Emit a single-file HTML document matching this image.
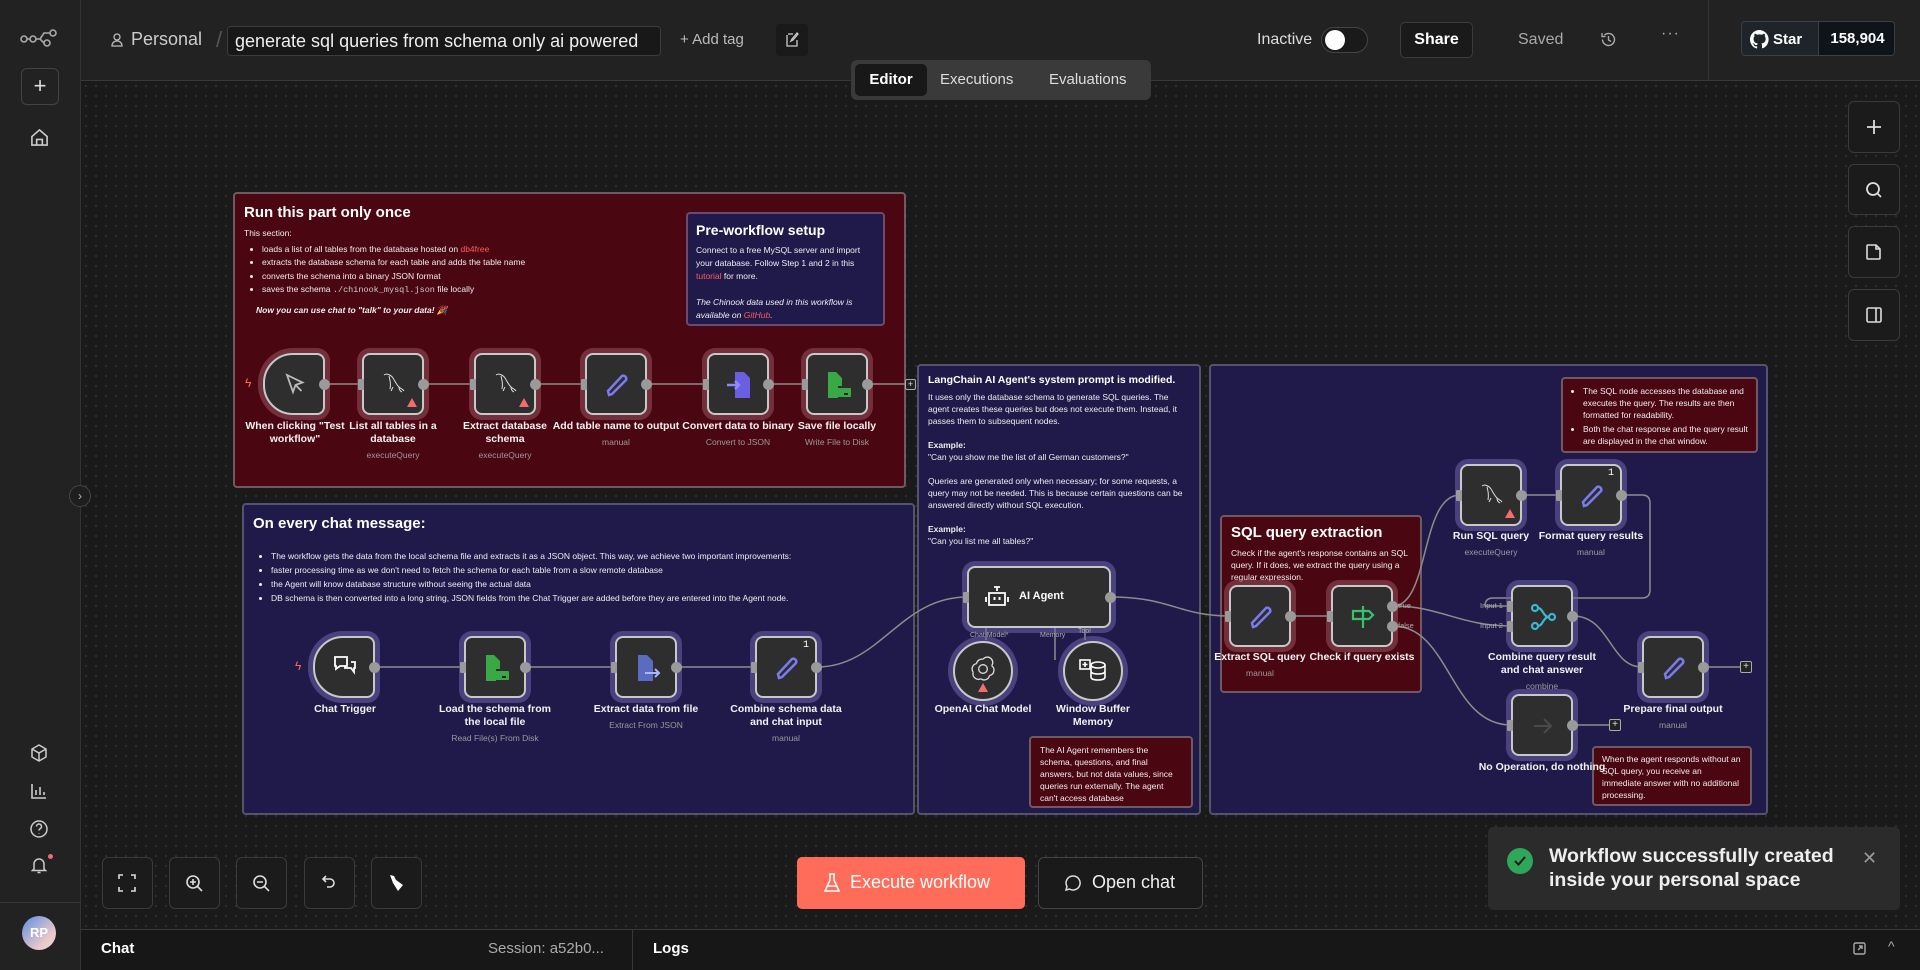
<!DOCTYPE html>
<html><head><meta charset="utf-8">
<style>
*{box-sizing:border-box;margin:0;padding:0}
body{width:1920px;height:970px;overflow:hidden;background:#1b1b1b;font-family:"Liberation Sans",sans-serif;color:#fff;position:relative}
.abs{position:absolute}
#canvas{position:absolute;left:81px;top:81px;width:1839px;height:849px;background-color:#1a1a1a;background-image:radial-gradient(#343434 0.8px,transparent 1px);background-size:10px 10px}
#side{position:absolute;left:0;top:0;width:81px;height:970px;background:#222;border-right:1px solid #333}
#head{position:absolute;left:81px;top:0;width:1839px;height:81px;background:#222;border-bottom:1px solid #383838}
.sticky{position:absolute;border:2px solid #5e5e66;border-radius:4px}
.red{background:#4b0711;border-color:#6e5a60}
.blue{background:#201a4a;border-color:#55536c}
.sticky h1{font-size:15px;font-weight:bold;margin:10px 0 0 9px}
.txt{font-size:8.5px;line-height:13.5px;color:#eee}
.txt ul{margin-left:18px}
.node{position:absolute;width:62px;height:62px;background:#2e2e2e;border:2px solid #c8c8c8;border-radius:8px}
.hr{box-shadow:0 0 0 5px rgba(150,80,95,.55)}
.hb{box-shadow:0 0 0 5px rgba(110,100,170,.55)}
.in{position:absolute;left:-6px;top:24px;width:6px;height:11px;background:#9a9a9a;border-radius:1px}
.out{position:absolute;right:-7px;top:24px;width:11px;height:11px;background:#9a9a9a;border-radius:50%}
.lbl{position:absolute;width:150px;text-align:center;font-size:10.5px;font-weight:bold;line-height:13px;color:#f2f2f2}
.lbl span{display:block;font-weight:normal;font-size:8.5px;color:#9a9a9a;margin-top:3px}
.btn{position:absolute;border:1px solid #3a3a3a;border-radius:6px;background:#1b1b1b}
.ico{position:absolute;display:flex;align-items:center;justify-content:center}
</style></head><body>
<div id="canvas"></div>

<!-- sidebar -->
<div id="side">
 <svg class="abs" style="left:20px;top:28px" width="38" height="20" viewBox="0 0 38 20" fill="none" stroke="#aaa" stroke-width="1.6"><circle cx="4" cy="11" r="3"/><circle cx="13" cy="11" r="3"/><circle cx="27" cy="15" r="3"/><circle cx="33" cy="5" r="3"/><path d="M7 11h3M16 11h4l4 4M20 11l4-6h6"/></svg>
 <div class="abs" style="left:21px;top:68px;width:38px;height:37px;border:1px solid #444;border-radius:6px;text-align:center;font-size:22px;line-height:33px;color:#ddd">+</div>
 <svg class="abs" style="left:30px;top:128px" width="19" height="19" viewBox="0 0 20 20" fill="none" stroke="#ccc" stroke-width="1.7"><path d="M2 9L10 2l8 7v9H2z"/><path d="M7 18v-6h6v6"/></svg>
 <svg class="abs" style="left:29px;top:743px" width="20" height="20" viewBox="0 0 20 20" fill="none" stroke="#ccc" stroke-width="1.5"><path d="M10 2l7 4v8l-7 4-7-4V6z M3 6l7 4 7-4 M10 10v8"/></svg>
 <svg class="abs" style="left:29px;top:781px" width="20" height="20" viewBox="0 0 20 20" fill="none" stroke="#ccc" stroke-width="1.6"><path d="M3 3v14h14M7 14V9M11 14V6M15 14v-3"/></svg>
 <svg class="abs" style="left:29px;top:819px" width="20" height="20" viewBox="0 0 20 20" fill="none" stroke="#ccc" stroke-width="1.5"><circle cx="10" cy="10" r="8"/><path d="M7.5 7.5a2.5 2.5 0 1 1 3.5 2.3c-.7.4-1 .9-1 1.7M10 14v.5"/></svg>
 <svg class="abs" style="left:29px;top:855px" width="20" height="20" viewBox="0 0 20 20" fill="none" stroke="#ccc" stroke-width="1.5"><path d="M5 14V9a5 5 0 0 1 10 0v5l1.5 1.5h-13z M8.5 17.5h3"/></svg>
 <div class="abs" style="left:48px;top:854px;width:5px;height:5px;border-radius:50%;background:#f06a7a"></div>
 <div class="abs" style="left:0;top:902px;width:81px;height:1px;background:#383838"></div>
 <div class="abs" style="left:22px;top:916px;width:34px;height:34px;border-radius:50%;background:linear-gradient(135deg,#5b8ee6,#e8c8c8 70%,#f5dada);font-size:13px;font-weight:bold;text-align:center;line-height:34px">RP</div>
</div>
<div class="abs" style="left:69px;top:485px;width:22px;height:22px;border-radius:50%;border:1px solid #444;background:#1e1e1e;color:#bbb;font-size:12px;text-align:center;line-height:20px">›</div>

<!-- header -->
<div id="head">
 <svg class="abs" style="left:30px;top:33px" width="12" height="14" viewBox="0 0 12 14" fill="none" stroke="#bbb" stroke-width="1.3"><circle cx="6" cy="4" r="3"/><path d="M1 13c0-3 2-5 5-5s5 2 5 5z"/></svg>
 <div class="abs" style="left:50px;top:29px;font-size:18px;color:#ccc">Personal</div>
 <div class="abs" style="left:135px;top:27px;font-size:22px;color:#555">/</div>
 <div class="abs" style="left:146px;top:26px;width:434px;height:30px;border:1px solid #3c3c3c;border-radius:4px;background:#181818;font-size:18px;line-height:28px;padding-left:7px;color:#eee">generate sql queries from schema only ai powered</div>
 <div class="abs" style="left:599px;top:31px;font-size:15px;color:#bbb">+ Add tag</div>
 <div class="abs" style="left:695px;top:24px;width:32px;height:32px;border-radius:4px;background:#1a1a1a"></div>
 <svg class="abs" style="left:704px;top:32px" width="14" height="16" viewBox="0 0 14 16" fill="none" stroke="#ccc" stroke-width="1.3"><path d="M3 2h5M2 3v11h10V8 M12 1l-5 6-1 2 2-1 5-6z"/></svg>
 <div class="abs" style="left:1176px;top:31px;font-size:16px;color:#ddd">Inactive</div>
 <div class="abs" style="left:1240px;top:27px;width:47px;height:26px;border-radius:13px;border:1px solid #444;background:#1a1a1a"><div style="position:absolute;left:3px;top:2px;width:20px;height:20px;border-radius:50%;background:#fff"></div></div>
 <div class="abs" style="left:1319px;top:22px;width:73px;height:36px;border:1px solid #3c3c3c;border-radius:5px;background:#1a1a1a;font-size:16px;font-weight:bold;text-align:center;line-height:34px">Share</div>
 <div class="abs" style="left:1437px;top:31px;font-size:16px;color:#aaa">Saved</div>
 <svg class="abs" style="left:1519px;top:31px" width="17" height="17" viewBox="0 0 17 17" fill="none" stroke="#aaa" stroke-width="1.4"><path d="M2.5 8.5a6 6 0 1 0 2-4.5M2 2v3.5h3.5M8.5 5v4l2.5 1.5"/></svg>
 <div class="abs" style="left:1580px;top:25px;font-size:16px;color:#aaa;letter-spacing:1px">···</div>
 <div class="abs" style="left:1627px;top:0;width:1px;height:80px;background:#333"></div>
 <div class="abs" style="left:1660px;top:21px;width:154px;height:35px;border:1px solid #3a3f48;border-radius:4px;background:#1f242b;overflow:hidden">
  <svg class="abs" style="left:8px;top:8px" width="19" height="19" viewBox="0 0 16 16" fill="#fff"><path d="M8 0a8 8 0 0 0-2.5 15.6c.4 0 .5-.2.5-.4v-1.5c-2.2.5-2.7-1-2.7-1-.4-.9-.9-1.2-.9-1.2-.7-.5.1-.5.1-.5.8.1 1.2.8 1.2.8.7 1.3 1.9.9 2.4.7 0-.5.3-.9.5-1.1-1.8-.2-3.6-.9-3.6-4 0-.9.3-1.6.8-2.1-.1-.2-.4-1 .1-2.1 0 0 .7-.2 2.2.8a7.5 7.5 0 0 1 4 0c1.5-1 2.2-.8 2.2-.8.4 1.1.2 1.9.1 2.1.5.6.8 1.3.8 2.1 0 3.1-1.9 3.7-3.6 3.9.3.3.5.8.5 1.5v2.2c0 .2.1.5.6.4A8 8 0 0 0 8 0z"/></svg>
  <div class="abs" style="left:31px;top:9px;font-size:15px;font-weight:bold">Star</div>
  <div class="abs" style="left:76px;top:0;width:78px;height:35px;background:#0f131a;border-left:1px solid #3a3f48;font-size:15px;font-weight:bold;text-align:center;line-height:34px">158,904</div>
 </div>
</div>
<!-- tabs -->
<div class="abs" style="left:851px;top:60px;width:300px;height:40px;background:#3a3a3a;border-radius:6px"></div>
<div class="abs" style="left:855px;top:64px;width:72px;height:32px;background:#181818;border-radius:5px;font-size:15px;font-weight:bold;text-align:center;line-height:32px">Editor</div>
<div class="abs" style="left:940px;top:71px;font-size:15px;color:#ddd">Executions</div>
<div class="abs" style="left:1049px;top:71px;font-size:15px;color:#ddd">Evaluations</div>

<!-- stickies -->
<div class="sticky red" style="left:233px;top:192px;width:673px;height:296px">
 <h1>Run this part only once</h1>
 <div class="txt" style="margin:6px 0 0 9px">This section:
  <ul style="margin-top:2px">
   <li>loads a list of all tables from the database hosted on <span style="color:#ff5a5a">db4free</span></li>
   <li>extracts the database schema for each table and adds the table name</li>
   <li>converts the schema into a binary JSON format</li>
   <li>saves the schema <span style="font-family:'Liberation Mono',monospace;color:#ccc">./chinook_mysql.json</span> file locally</li>
  </ul>
  <div style="margin:6px 0 0 12px;font-style:italic;font-weight:bold">Now you can use chat to "talk" to your data! 🎉</div>
 </div>
</div>
<div class="sticky blue" style="left:686px;top:212px;width:199px;height:114px;border-color:#6a4a6e;padding:8px 8px">
 <div style="font-size:14px;font-weight:bold">Pre-workflow setup</div>
 <div class="txt" style="margin-top:6px;line-height:13px">Connect to a free MySQL server and import your database. Follow Step 1 and 2 in this <span style="color:#ff5a5a">tutorial</span> for more.<br><br><i>The Chinook data used in this workflow is available on <span style="color:#ff5a5a">GitHub</span>.</i></div>
</div>

<div class="sticky blue" style="left:242px;top:503px;width:673px;height:312px">
 <h1 style="margin-top:10px">On every chat message:</h1>
 <div class="txt" style="margin:17px 0 0 9px;font-size:8.5px;line-height:14px"><ul>
  <li>The workflow gets the data from the local schema file and extracts it as a JSON object. This way, we achieve two important improvements:</li>
  <li>faster processing time as we don't need to fetch the schema for each table from a slow remote database</li>
  <li>the Agent will know database structure without seeing the actual data</li>
  <li>DB schema is then converted into a long string, JSON fields from the Chat Trigger are added before they are entered into the Agent node.</li></ul></div>
</div>

<div class="sticky blue" style="left:917px;top:364px;width:284px;height:451px;padding:8px 9px">
 <div style="font-size:10.5px;font-weight:bold">LangChain AI Agent's system prompt is modified.</div>
 <div class="txt" style="margin-top:5px;line-height:12px">It uses only the database schema to generate SQL queries. The agent creates these queries but does not execute them. Instead, it passes them to subsequent nodes.<br><br><b>Example:</b><br>"Can you show me the list of all German customers?"<br><br>Queries are generated only when necessary; for some requests, a query may not be needed. This is because certain questions can be answered directly without SQL execution.<br><br><b>Example:</b><br>"Can you list me all tables?"</div>
</div>
<div class="sticky red" style="left:1029px;top:736px;width:164px;height:72px;padding:6px 9px"><div class="txt" style="line-height:12px">The AI Agent remembers the schema, questions, and final answers, but not data values, since queries run externally. The agent can't access database</div></div>

<div class="sticky blue" style="left:1209px;top:364px;width:559px;height:451px"></div>
<div class="sticky red" style="left:1561px;top:377px;width:197px;height:76px;padding:6px 4px"><div class="txt" style="line-height:12px"><ul style="margin-left:16px"><li>The SQL node accesses the database and executes the query. The results are then formatted for readability.</li><li style="margin-top:2px">Both the chat response and the query result are displayed in the chat window.</li></ul></div></div>
<div class="sticky red" style="left:1220px;top:515px;width:202px;height:178px;padding:7px 9px">
 <div style="font-size:15px;font-weight:bold">SQL query extraction</div>
 <div class="txt" style="margin-top:6px;line-height:12px">Check if the agent's response contains an SQL query. If it does, we extract the query using a regular expression.</div>
</div>
<div class="sticky red" style="left:1592px;top:746px;width:160px;height:60px;padding:5px 8px"><div class="txt" style="line-height:12px">When the agent responds without an SQL query, you receive an immediate answer with no additional processing.</div></div>

<!-- edges -->
<svg class="abs" style="left:0;top:0" width="1920" height="970" fill="none" stroke="#8c8c8c" stroke-width="1.5">
 <path d="M327 384H362M424 384H474M536 384H585M647 384H707M769 384H806M868 384H906"/>
 <path d="M377 667H464M526 667H615M677 667H755"/>
 <path d="M817 667C880 667 900 597 967 597"/>
 <path d="M1111 597C1170 597 1180 616 1229 616"/>
 <path d="M1291 616H1331"/>
 <path d="M1393 606C1430 606 1420 495 1460 495"/>
 <path d="M1393 606C1440 606 1460 626 1511 626"/>
 <path d="M1393 626C1450 626 1450 725 1511 725"/>
 <path d="M1522 495H1560"/>
 <path d="M1622 495H1642Q1650 495 1650 503V590Q1650 598 1642 598H1493Q1485 598 1485 606H1511"/>
 <path d="M1573 616C1610 616 1610 667 1642 667"/>
 <path d="M1704 667H1740M1573 725H1610"/>
 <path d="M986 628V640M1055 628V660M1085 628V640"/>
</svg>
<div class="abs" style="left:905px;top:379px;width:11px;height:11px;border:1px solid #aaa;border-radius:2px;background:#222;font-size:9px;line-height:9px;text-align:center;color:#ddd">+</div>
<div class="abs" style="left:1740px;top:661px;width:12px;height:12px;border:1px solid #aaa;border-radius:2px;background:#222;font-size:10px;line-height:10px;text-align:center;color:#ddd">+</div>
<div class="abs" style="left:1609px;top:719px;width:12px;height:12px;border:1px solid #aaa;border-radius:2px;background:#222;font-size:10px;line-height:10px;text-align:center;color:#ddd">+</div>

<!-- row1 nodes -->
<div class="abs" style="left:245px;top:376px;color:#ff6a4a;font-size:12px">ϟ</div>
<div class="node hr" style="left:263px;top:353px;border-radius:30px 8px 8px 30px"><div class="out"></div>
 <svg class="abs" style="left:18px;top:17px" width="24" height="24" viewBox="0 0 24 24" fill="none" stroke="#bbb" stroke-width="1.8"><path d="M4 3l6 17 2.5-7 7-2.5z M12.5 13l6 6"/></svg></div>
<div class="node hr" style="left:362px;top:353px"><div class="in"></div><div class="out"></div>
 <svg class="abs" style="left:15px;top:14px" width="30" height="30" viewBox="0 0 30 30" fill="none" stroke="#ddd" stroke-width="1"><path d="M5 6c3-2 7 0 9 3s3 6 6 9c2 2 4 2 5 4M10 7c1 4 2 8 1 13M14 18l-2 4M20 18c0 2 1 4 3 5"/></svg>
 <div class="abs" style="left:43px;top:43px;width:0;height:0;border-left:5px solid transparent;border-right:5px solid transparent;border-bottom:9px solid #f26d6d"></div></div>
<div class="node hr" style="left:474px;top:353px"><div class="in"></div><div class="out"></div>
 <svg class="abs" style="left:15px;top:14px" width="30" height="30" viewBox="0 0 30 30" fill="none" stroke="#ddd" stroke-width="1"><path d="M5 6c3-2 7 0 9 3s3 6 6 9c2 2 4 2 5 4M10 7c1 4 2 8 1 13M14 18l-2 4M20 18c0 2 1 4 3 5"/></svg>
 <div class="abs" style="left:43px;top:43px;width:0;height:0;border-left:5px solid transparent;border-right:5px solid transparent;border-bottom:9px solid #f26d6d"></div></div>
<div class="node hr" style="left:585px;top:353px"><div class="in"></div><div class="out"></div>
 <svg class="abs" style="left:16px;top:16px" width="28" height="28" viewBox="0 0 28 28" fill="none" stroke="#7b7bf0" stroke-width="2.5"><path d="M6 24l-1-4L19 5a3 3 0 0 1 4 4L9 23z"/></svg></div>
<div class="node hr" style="left:707px;top:353px"><div class="in"></div><div class="out"></div>
 <svg class="abs" style="left:16px;top:15px" width="28" height="30" viewBox="0 0 28 30"><path d="M10 2h9l6 6v20H10z" fill="#6a5fe0"/><path d="M2 15h12M10 11l4 4-4 4" stroke="#8f88ff" stroke-width="2.5" fill="none"/></svg></div>
<div class="node hr" style="left:806px;top:353px"><div class="in"></div><div class="out"></div>
 <svg class="abs" style="left:16px;top:15px" width="30" height="30" viewBox="0 0 30 30"><path d="M4 2h8l6 6v8H4z M4 14h10v14H4z" fill="#3aa845"/><rect x="13" y="18" width="14" height="9" rx="1" fill="#3aa845"/><rect x="20" y="23" width="4" height="2" fill="#222"/></svg></div>
<div class="lbl" style="left:220px;top:420px">When clicking "Test<br>workflow"</div>
<div class="lbl" style="left:318px;top:420px">List all tables in a<br>database<span>executeQuery</span></div>
<div class="lbl" style="left:430px;top:420px">Extract database<br>schema<span>executeQuery</span></div>
<div class="lbl" style="left:541px;top:420px">Add table name to output<span>manual</span></div>
<div class="lbl" style="left:663px;top:420px">Convert data to binary<span>Convert to JSON</span></div>
<div class="lbl" style="left:762px;top:420px">Save file locally<span>Write File to Disk</span></div>

<!-- row2 nodes -->
<div class="abs" style="left:295px;top:659px;color:#ff6a4a;font-size:12px">ϟ</div>
<div class="node hb" style="left:313px;top:636px;border-radius:30px 8px 8px 30px"><div class="out"></div>
 <svg class="abs" style="left:17px;top:16px" width="26" height="26" viewBox="0 0 26 26" fill="none" stroke="#fff" stroke-width="1.8"><path d="M3 3h12v9H8l-4 3v-3H3z M13 12v2h6l3 4v-4h1V8h-4"/></svg></div>
<div class="node hb" style="left:464px;top:636px"><div class="in"></div><div class="out"></div>
 <svg class="abs" style="left:16px;top:15px" width="30" height="30" viewBox="0 0 30 30"><path d="M4 2h8l6 6v8H4z M4 14h10v14H4z" fill="#3aa845"/><rect x="13" y="18" width="14" height="9" rx="1" fill="#3aa845"/><rect x="20" y="23" width="4" height="2" fill="#222"/></svg></div>
<div class="node hb" style="left:615px;top:636px"><div class="in"></div><div class="out"></div>
 <svg class="abs" style="left:16px;top:15px" width="30" height="30" viewBox="0 0 30 30"><path d="M5 2h9l6 6v20H5z" fill="#5a6cc0"/><path d="M12 20h14M22 16l4 4-4 4" stroke="#aab4ff" stroke-width="2" fill="none"/></svg></div>
<div class="node hb" style="left:755px;top:636px"><div class="in"></div><div class="out"></div>
 <div class="abs" style="right:6px;top:2px;font-size:10px;font-family:'Liberation Mono',monospace">1</div>
 <svg class="abs" style="left:16px;top:16px" width="28" height="28" viewBox="0 0 28 28" fill="none" stroke="#7b7bf0" stroke-width="2.5"><path d="M6 24l-1-4L19 5a3 3 0 0 1 4 4L9 23z"/></svg></div>
<div class="lbl" style="left:270px;top:703px">Chat Trigger</div>
<div class="lbl" style="left:420px;top:703px">Load the schema from<br>the local file<span>Read File(s) From Disk</span></div>
<div class="lbl" style="left:571px;top:703px">Extract data from file<span>Extract From JSON</span></div>
<div class="lbl" style="left:711px;top:703px">Combine schema data<br>and chat input<span>manual</span></div>

<!-- AI agent -->
<div class="node hb" style="left:967px;top:566px;width:144px;height:62px"><div class="in"></div><div class="out"></div>
 <svg class="abs" style="left:16px;top:17px" width="24" height="24" viewBox="0 0 24 24" fill="none" stroke="#fff" stroke-width="1.8"><path d="M12 2v4M9 2h6M4 8h16v12H4z M1 12v5M23 12v5"/><rect x="8.5" y="12" width="2" height="3" fill="#fff" stroke="none"/><rect x="13.5" y="12" width="2" height="3" fill="#fff" stroke="none"/></svg>
 <div class="abs" style="left:50px;top:22px;font-size:11px;font-weight:bold">AI Agent</div></div>
<div class="abs" style="left:970px;top:632px;font-size:7px;color:#aaa">Chat Model*</div>
<div class="abs" style="left:1040px;top:632px;font-size:7px;color:#aaa">Memory</div>
<div class="abs" style="left:1078px;top:628px;font-size:7px;color:#aaa">Tool</div>
<div class="abs" style="left:953px;top:641px;width:60px;height:60px;border-radius:50%;background:#2e2e2e;border:2px solid #c8c8c8;box-shadow:0 0 0 5px rgba(110,100,170,.55)">
 <svg class="abs" style="left:15px;top:13px" width="26" height="26" viewBox="0 0 24 24" fill="none" stroke="#ddd" stroke-width="1.2"><circle cx="12" cy="12" r="4"/><path d="M12 3a5 5 0 0 1 8 6M20 9a5 5 0 0 1-2 9M18 18a5 5 0 0 1-8 3M10 21a5 5 0 0 1-7-6M3 15a5 5 0 0 1 3-8M6 7a5 5 0 0 1 6-4"/></svg>
 <div class="abs" style="left:23px;top:40px;width:0;height:0;border-left:5px solid transparent;border-right:5px solid transparent;border-bottom:9px solid #f26d6d"></div></div>
<div class="abs" style="left:1063px;top:641px;width:60px;height:60px;border-radius:50%;background:#2e2e2e;border:2px solid #c8c8c8;box-shadow:0 0 0 5px rgba(110,100,170,.55)">
 <svg class="abs" style="left:14px;top:16px" width="28" height="24" viewBox="0 0 28 24" fill="none" stroke="#fff" stroke-width="1.6"><rect x="1" y="1" width="10" height="9" fill="#2e2e2e"/><path d="M6 3v5M3.5 5.5h5"/><ellipse cx="19" cy="6" rx="7" ry="3"/><path d="M12 6v12c0 2 3 3 7 3s7-1 7-3V6M12 12c0 2 3 3 7 3s7-1 7-3"/></svg></div>
<div class="lbl" style="left:908px;top:703px">OpenAI Chat Model</div>
<div class="lbl" style="left:1018px;top:703px">Window Buffer<br>Memory</div>

<!-- SQL area nodes -->
<div class="node hr" style="left:1229px;top:585px"><div class="in"></div><div class="out"></div>
 <svg class="abs" style="left:16px;top:16px" width="28" height="28" viewBox="0 0 28 28" fill="none" stroke="#7b7bf0" stroke-width="2.5"><path d="M6 24l-1-4L19 5a3 3 0 0 1 4 4L9 23z"/></svg></div>
<div class="node hr" style="left:1331px;top:585px"><div class="in"></div>
 <div class="out" style="top:14px"></div><div class="out" style="top:34px"></div>
 <svg class="abs" style="left:16px;top:16px" width="28" height="28" viewBox="0 0 28 28" fill="none" stroke="#35c46a" stroke-width="2.2"><path d="M14 3v22M4 8h16l4 4-4 4H4z"/></svg></div>
<div class="abs" style="left:1398px;top:601px;font-size:7.5px;color:#aaa">true</div>
<div class="abs" style="left:1398px;top:621px;font-size:7.5px;color:#aaa">false</div>
<div class="lbl" style="left:1185px;top:651px">Extract SQL query<span>manual</span></div>
<div class="lbl" style="left:1287px;top:651px">Check if query exists</div>

<div class="node hb" style="left:1460px;top:464px"><div class="in"></div><div class="out"></div>
 <svg class="abs" style="left:15px;top:14px" width="30" height="30" viewBox="0 0 30 30" fill="none" stroke="#ddd" stroke-width="1"><path d="M5 6c3-2 7 0 9 3s3 6 6 9c2 2 4 2 5 4M10 7c1 4 2 8 1 13M14 18l-2 4M20 18c0 2 1 4 3 5"/></svg>
 <div class="abs" style="left:43px;top:43px;width:0;height:0;border-left:5px solid transparent;border-right:5px solid transparent;border-bottom:9px solid #f26d6d"></div></div>
<div class="node hb" style="left:1560px;top:464px"><div class="in"></div><div class="out"></div>
 <div class="abs" style="right:6px;top:2px;font-size:10px;font-family:'Liberation Mono',monospace">1</div>
 <svg class="abs" style="left:16px;top:16px" width="28" height="28" viewBox="0 0 28 28" fill="none" stroke="#7b7bf0" stroke-width="2.5"><path d="M6 24l-1-4L19 5a3 3 0 0 1 4 4L9 23z"/></svg></div>
<div class="lbl" style="left:1416px;top:530px">Run SQL query<span>executeQuery</span></div>
<div class="lbl" style="left:1516px;top:530px">Format query results<span>manual</span></div>

<div class="node hb" style="left:1511px;top:585px"><div class="in" style="top:14px"></div><div class="in" style="top:34px"></div><div class="out"></div>
 <svg class="abs" style="left:16px;top:16px" width="28" height="28" viewBox="0 0 28 28" fill="none" stroke="#3ab8d0" stroke-width="2.2"><circle cx="6" cy="5" r="3"/><circle cx="6" cy="23" r="3"/><circle cx="23" cy="14" r="3"/><path d="M9 5c5 0 5 9 11 9M9 23c5 0 5-9 11-9"/></svg></div>
<div class="abs" style="left:1480px;top:601px;font-size:7.5px;color:#aaa">Input 1</div>
<div class="abs" style="left:1480px;top:621px;font-size:7.5px;color:#aaa">Input 2</div>
<div class="lbl" style="left:1467px;top:651px">Combine query result<br>and chat answer<span>combine</span></div>

<div class="node hb" style="left:1642px;top:636px"><div class="in"></div><div class="out"></div>
 <svg class="abs" style="left:16px;top:16px" width="28" height="28" viewBox="0 0 28 28" fill="none" stroke="#7b7bf0" stroke-width="2.5"><path d="M6 24l-1-4L19 5a3 3 0 0 1 4 4L9 23z"/></svg></div>
<div class="lbl" style="left:1598px;top:703px">Prepare final output<span>manual</span></div>

<div class="node hb" style="left:1511px;top:694px"><div class="in"></div><div class="out"></div>
 <svg class="abs" style="left:18px;top:18px" width="24" height="24" viewBox="0 0 24 24" fill="none" stroke="#4a4a4a" stroke-width="2"><path d="M3 12h17M13 5l7 7-7 7"/></svg></div>
<div class="lbl" style="left:1467px;top:761px">No Operation, do nothing</div>

<!-- right toolbar -->
<div class="btn" style="left:1848px;top:101px;width:52px;height:52px"></div>
<div class="btn" style="left:1848px;top:164px;width:52px;height:51px"></div>
<div class="btn" style="left:1848px;top:226px;width:52px;height:52px"></div>
<div class="btn" style="left:1848px;top:289px;width:52px;height:52px"></div>
<svg class="abs" style="left:1864px;top:117px" width="20" height="20" viewBox="0 0 20 20" stroke="#ddd" stroke-width="1.8"><path d="M10 3v14M3 10h14"/></svg>
<svg class="abs" style="left:1864px;top:180px" width="20" height="20" viewBox="0 0 20 20" fill="none" stroke="#ddd" stroke-width="1.8"><circle cx="9" cy="9" r="6"/><path d="M13.5 13.5L17 17"/></svg>
<svg class="abs" style="left:1864px;top:242px" width="20" height="20" viewBox="0 0 20 20" fill="none" stroke="#ddd" stroke-width="1.6"><path d="M4 3h8l4 4v9a1 1 0 0 1-1 1H4a1 1 0 0 1-1-1V4a1 1 0 0 1 1-1z M12 3v4h4"/></svg>
<svg class="abs" style="left:1864px;top:305px" width="20" height="20" viewBox="0 0 20 20" fill="none" stroke="#ddd" stroke-width="1.6"><rect x="3" y="3" width="14" height="14" rx="1.5"/><path d="M12 3v14"/></svg>

<!-- bottom canvas buttons -->
<div class="btn" style="left:102px;top:857px;width:51px;height:52px"></div>
<div class="btn" style="left:169px;top:857px;width:51px;height:52px"></div>
<div class="btn" style="left:236px;top:857px;width:51px;height:52px"></div>
<div class="btn" style="left:304px;top:857px;width:51px;height:52px"></div>
<div class="btn" style="left:371px;top:857px;width:51px;height:52px"></div>
<svg class="abs" style="left:118px;top:874px" width="18" height="18" viewBox="0 0 18 18" fill="none" stroke="#ddd" stroke-width="1.6"><path d="M1 5V1h4M13 1h4v4M17 13v4h-4M5 17H1v-4"/></svg>
<svg class="abs" style="left:185px;top:874px" width="19" height="19" viewBox="0 0 19 19" fill="none" stroke="#ddd" stroke-width="1.6"><circle cx="8" cy="8" r="6"/><path d="M12.5 12.5L17 17M8 5v6M5 8h6"/></svg>
<svg class="abs" style="left:252px;top:874px" width="19" height="19" viewBox="0 0 19 19" fill="none" stroke="#ddd" stroke-width="1.6"><circle cx="8" cy="8" r="6"/><path d="M12.5 12.5L17 17M5 8h6"/></svg>
<svg class="abs" style="left:320px;top:874px" width="18" height="18" viewBox="0 0 18 18" fill="none" stroke="#ddd" stroke-width="1.6"><path d="M6 2L3 5l3 3M3 5h7a4 4 0 0 1 0 8H7"/></svg>
<svg class="abs" style="left:387px;top:873px" width="20" height="20" viewBox="0 0 20 20" fill="#fff"><path d="M3 2l4 1 2 4 7 5-5 6-5-8z"/></svg>

<!-- execute / open chat -->
<div class="abs" style="left:797px;top:857px;width:228px;height:52px;background:#ff6d5a;border-radius:5px"></div>
<svg class="abs" style="left:824px;top:873px" width="16" height="20" viewBox="0 0 16 20" fill="none" stroke="#fff" stroke-width="1.5"><path d="M5 1h6M6 1v6L1 18h14L10 7V1M3.5 13h9"/></svg>
<div class="abs" style="left:850px;top:872px;font-size:18px;color:#fff">Execute workflow</div>
<div class="btn" style="left:1038px;top:857px;width:165px;height:52px;background:#1a1a1a;border-color:#444"></div>
<svg class="abs" style="left:1064px;top:874px" width="18" height="18" viewBox="0 0 18 18" fill="none" stroke="#ddd" stroke-width="1.5"><path d="M9 2a7 7 0 1 1-3.5 13L2 16l1-3.5A7 7 0 0 1 9 2z"/></svg>
<div class="abs" style="left:1092px;top:872px;font-size:18px;color:#eee">Open chat</div>

<!-- toast -->
<div class="abs" style="left:1488px;top:827px;width:412px;height:83px;background:#2b2b2b;border-radius:5px"></div>
<div class="abs" style="left:1507px;top:848px;width:26px;height:26px;border-radius:50%;background:#2fa75a"></div>
<svg class="abs" style="left:1513px;top:854px" width="14" height="14" viewBox="0 0 14 14" fill="none" stroke="#1a1a1a" stroke-width="2"><path d="M2 7l3.5 3.5L12 3"/></svg>
<div class="abs" style="left:1549px;top:844px;font-size:19.5px;font-weight:bold;line-height:24px;color:#eee">Workflow successfully created<br>inside your personal space</div>
<div class="abs" style="left:1862px;top:848px;font-size:18px;color:#999">✕</div>

<!-- bottom panel -->
<div class="abs" style="left:81px;top:929px;width:1839px;height:41px;background:#171717;border-top:1px solid #383838"></div>
<div class="abs" style="left:101px;top:940px;font-size:15px;font-weight:bold">Chat</div>
<div class="abs" style="left:488px;top:940px;font-size:15px;color:#aaa">Session: a52b0...</div>
<div class="abs" style="left:632px;top:930px;width:1px;height:40px;background:#383838"></div>
<div class="abs" style="left:653px;top:940px;font-size:15px;font-weight:bold">Logs</div>
<svg class="abs" style="left:1852px;top:941px" width="15" height="15" viewBox="0 0 15 15" fill="none" stroke="#aaa" stroke-width="1.4"><rect x="2" y="2" width="11" height="11" rx="1.5"/><path d="M6 9l4-4M7 5h3v3"/></svg>
<div class="abs" style="left:1888px;top:938px;font-size:14px;color:#aaa">^</div>
</body></html>
